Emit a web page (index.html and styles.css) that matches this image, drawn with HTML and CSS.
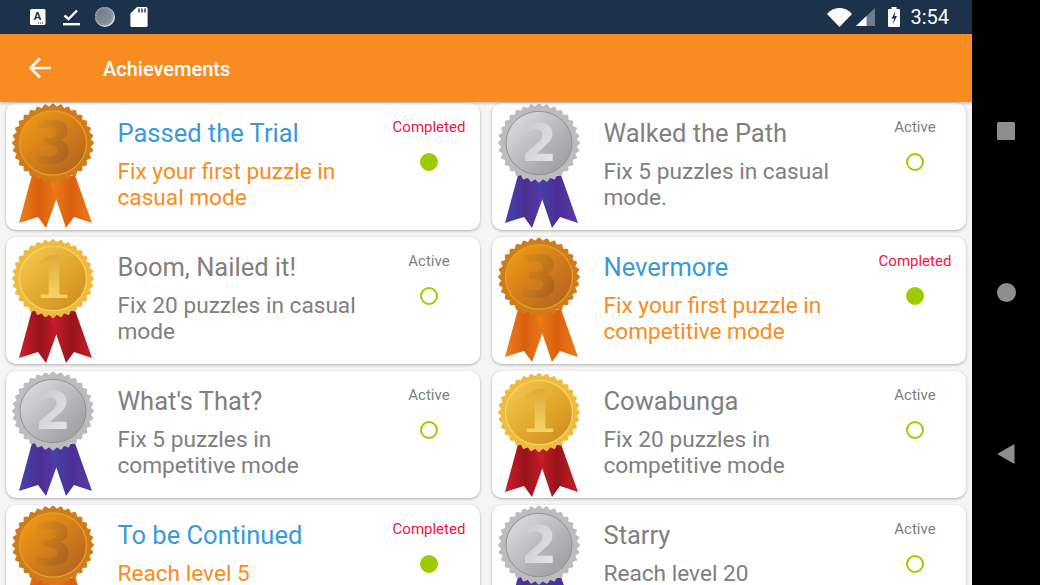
FILE: index.html
```html
<!DOCTYPE html>
<html lang="en">
<head>
<meta charset="utf-8">
<title>Achievements</title>
<link rel="stylesheet" href="styles.css">
</head>
<body>
<svg class="defs" aria-hidden="true">
  <defs>
    <linearGradient id="b3" x1="0" y1="0" x2="1" y2="1"><stop offset="0" stop-color="#f4a010"/><stop offset=".55" stop-color="#cf7a1c"/><stop offset="1" stop-color="#ad5f20"/></linearGradient>
    <linearGradient id="b3d" x1="0" y1="0" x2="1" y2="1"><stop offset="0" stop-color="#e8951a"/><stop offset="1" stop-color="#9a5520"/></linearGradient>
    <linearGradient id="r3" x1="0" y1="0" x2="1" y2="0"><stop offset="0" stop-color="#f07f17"/><stop offset=".5" stop-color="#d9600f"/><stop offset="1" stop-color="#ee7a16"/></linearGradient>
    <linearGradient id="b2" x1="0" y1="0" x2="1" y2="1"><stop offset="0" stop-color="#e2e2e4"/><stop offset=".6" stop-color="#b3b3b6"/><stop offset="1" stop-color="#98989c"/></linearGradient>
    <linearGradient id="b2d" x1="0" y1="0" x2="1" y2="1"><stop offset="0" stop-color="#c4c4c7"/><stop offset="1" stop-color="#ececee"/></linearGradient>
    <linearGradient id="r2" x1="0" y1="0" x2="1" y2="0"><stop offset="0" stop-color="#3f46ae"/><stop offset=".5" stop-color="#4b2f95"/><stop offset="1" stop-color="#5a3aa8"/></linearGradient>
    <linearGradient id="b1" x1="0" y1="0" x2="1" y2="1"><stop offset="0" stop-color="#f6cc50"/><stop offset=".6" stop-color="#e0a32a"/><stop offset="1" stop-color="#c98a1e"/></linearGradient>
    <linearGradient id="b1d" x1="0" y1="0" x2="0" y2="1"><stop offset="0" stop-color="#dca028"/><stop offset="1" stop-color="#fbe27a"/></linearGradient>
    <linearGradient id="r1" x1="0" y1="0" x2="1" y2="0"><stop offset="0" stop-color="#d21f2b"/><stop offset=".5" stop-color="#96141c"/><stop offset="1" stop-color="#cc1c26"/></linearGradient>
    <linearGradient id="disc" x1="0" y1="0" x2="1" y2="1"><stop offset="0" stop-color="#6d7888"/><stop offset="1" stop-color="#8c95a2"/></linearGradient>

    <g id="seal">
      <rect x="-29.400" y="-29.400" width="58.800" height="58.800" rx="1.500"/>
      <rect x="-29.400" y="-29.400" width="58.800" height="58.800" rx="1.500" transform="rotate(11.250)"/>
      <rect x="-29.400" y="-29.400" width="58.800" height="58.800" rx="1.500" transform="rotate(22.500)"/>
      <rect x="-29.400" y="-29.400" width="58.800" height="58.800" rx="1.500" transform="rotate(33.750)"/>
      <rect x="-29.400" y="-29.400" width="58.800" height="58.800" rx="1.500" transform="rotate(45)"/>
      <rect x="-29.400" y="-29.400" width="58.800" height="58.800" rx="1.500" transform="rotate(56.250)"/>
      <rect x="-29.400" y="-29.400" width="58.800" height="58.800" rx="1.500" transform="rotate(67.500)"/>
      <rect x="-29.400" y="-29.400" width="58.800" height="58.800" rx="1.500" transform="rotate(78.750)"/>
    </g>
    <path id="rib-l" d="M26 72 13 120l19-6 8 11 13-36-2-17z"/>
    <path id="rib-r" d="M44 78 60 125l8-11 18 6L69 72z"/>

    <symbol id="medal3" viewBox="0 0 100 128">
      <use href="#rib-l" fill="url(#r3)"/>
      <use href="#rib-r" fill="url(#r3)"/>
      <g transform="translate(47 40) scale(1 .96)">
        <use href="#seal" fill="#cf7c1c"/>
        <circle r="33.500" fill="url(#b3)" stroke="#e8a024" stroke-width="1.200"/>
      </g>
      <text class="digit" x="47" y="60" fill="url(#b3d)">3</text>
    </symbol>
    <symbol id="medal2" viewBox="0 0 100 128">
      <use href="#rib-l" fill="url(#r2)"/>
      <use href="#rib-r" fill="url(#r2)"/>
      <g transform="translate(47 40) scale(1 .96)">
        <use href="#seal" fill="#bcbcbf"/>
        <circle r="33" fill="url(#b2)" stroke="#8f8f93"/>
      </g>
      <text class="digit small" x="47" y="58" fill="url(#b2d)">2</text>
    </symbol>
    <symbol id="medal1" viewBox="0 0 100 128">
      <use href="#rib-l" y="1" fill="url(#r1)"/>
      <use href="#rib-r" y="1" fill="url(#r1)"/>
      <g transform="translate(47 41.500) scale(1 .96)">
        <use href="#seal" fill="#efbb3e"/>
        <circle r="33.500" fill="url(#b1)" stroke="#f5d468" stroke-width="1.200"/>
      </g>
      <text class="digit serif" x="47" y="61" fill="url(#b1d)">1</text>
    </symbol>
  </defs>
</svg>

<div class="app">
  <header class="status">
    <div class="status-left">
      <svg class="ic" width="18" height="18" viewBox="0 0 18 18"><rect x="1" y="1" width="15.500" height="16" rx="1.500" fill="#fff"/><text class="ic-a" x="8.500" y="12">A</text><path d="M9 15h1M11 15h1M13 15h1" stroke="#1c314a"/></svg>
      <svg class="ic" width="18" height="18" viewBox="0 0 18 18"><path d="M2.500 7.500 6.500 11 15 2.500" fill="none" stroke="#fff" stroke-width="2.400"/><rect x="1" y="15" width="17" height="2.400" fill="#fff"/></svg>
      <svg class="ic" width="20" height="20" viewBox="0 0 20 20"><circle cx="10" cy="10" r="10" fill="#dfe3e6"/><circle cx="9.300" cy="9.300" r="9.500" fill="url(#disc)"/><circle cx="9.300" cy="9.300" r="8.200" fill="none" stroke="#a9b0ba" stroke-width="1.600" stroke-dasharray="1 1.600"/></svg>
      <svg class="ic" width="18" height="20" viewBox="0 0 18 20"><path d="M7 0h9a1.600 1.600 0 0 1 1.600 1.600v16.800A1.600 1.600 0 0 1 16 20H2a1.600 1.600 0 0 1-1.600-1.600V6.400z" fill="#fff"/><path d="M9 1.500v4M12 1.500v4M15 1.500v4" stroke="#1c314a" stroke-width="1.400"/></svg>
    </div>
    <div class="status-right">
      <svg class="ic-wifi" width="25" height="19" viewBox="0 0 25 19"><path d="M0 6A16 16 0 0 1 25 6L12.500 19z" fill="#fff"/></svg>
      <svg class="ic-signal" width="19" height="18" viewBox="0 0 19 18"><path d="M0 18 19 0v18z" fill="#6f7c8c"/><path d="M0 18 10.500 8v10z" fill="#fff"/></svg>
      <svg class="ic-batt" width="12" height="20" viewBox="0 0 12 20"><path d="M3.500 0h5v2H11a1 1 0 0 1 1 1v16a1 1 0 0 1-1 1H1a1 1 0 0 1-1-1V3a1 1 0 0 1 1-1h2.500z" fill="#fff"/><path d="M7.500 4 3.500 11.500H6L5 17l4-8H6.500z" fill="#1c314a"/></svg>
      <span class="time">3:54</span>
    </div>
  </header>
  <div class="toolbar">
    <svg class="back" width="26" height="26" viewBox="0 0 26 26"><path d="M24 13H4M13 3.500 3.500 13l9.500 9.500" fill="none" stroke="#fff" stroke-width="2.600"/></svg>
    <h1 class="title">Achievements</h1>
  </div>
  <main class="list">
    <article class="card">
      <svg class="medal"><use href="#medal3"/></svg>
      <div class="body done"><h2>Passed the Trial</h2><p>Fix your first puzzle in casual mode</p></div>
      <div class="state done"><span>Completed</span><i class="dot"></i></div>
    </article>
    <article class="card">
      <svg class="medal"><use href="#medal2"/></svg>
      <div class="body"><h2>Walked the Path</h2><p>Fix 5 puzzles in casual mode.</p></div>
      <div class="state"><span>Active</span><i class="dot"></i></div>
    </article>
    <article class="card">
      <svg class="medal"><use href="#medal1"/></svg>
      <div class="body"><h2>Boom, Nailed it!</h2><p>Fix 20 puzzles in casual mode</p></div>
      <div class="state"><span>Active</span><i class="dot"></i></div>
    </article>
    <article class="card">
      <svg class="medal"><use href="#medal3"/></svg>
      <div class="body done"><h2>Nevermore</h2><p>Fix your first puzzle in competitive mode</p></div>
      <div class="state done"><span>Completed</span><i class="dot"></i></div>
    </article>
    <article class="card">
      <svg class="medal"><use href="#medal2"/></svg>
      <div class="body"><h2>What's That?</h2><p>Fix 5 puzzles in competitive mode</p></div>
      <div class="state"><span>Active</span><i class="dot"></i></div>
    </article>
    <article class="card">
      <svg class="medal"><use href="#medal1"/></svg>
      <div class="body"><h2>Cowabunga</h2><p>Fix 20 puzzles in competitive mode</p></div>
      <div class="state"><span>Active</span><i class="dot"></i></div>
    </article>
    <article class="card">
      <svg class="medal"><use href="#medal3"/></svg>
      <div class="body done"><h2>To be Continued</h2><p>Reach level 5</p></div>
      <div class="state done"><span>Completed</span><i class="dot"></i></div>
    </article>
    <article class="card">
      <svg class="medal"><use href="#medal2"/></svg>
      <div class="body"><h2>Starry</h2><p>Reach level 20</p></div>
      <div class="state"><span>Active</span><i class="dot"></i></div>
    </article>
  </main>
</div>
<nav class="nav">
  <span class="nav-square"></span>
  <span class="nav-circle"></span>
  <svg class="nav-back" width="18" height="20" viewBox="0 0 18 20"><path d="M17.500 1v18a.6.6 0 0 1-.9.500L1 10.500a.6.6 0 0 1 0-1L16.600.5a.6.6 0 0 1 .9.500z" fill="#8e8e8e"/></svg>
</nav>
</body>
</html>
```

FILE: styles.css
```css
* { box-sizing: border-box; }
html, body { margin: 0; height: 585px; overflow: hidden; }
body { display: flex; width: 1040px; background: #000; font-family: Roboto, "Liberation Sans", sans-serif; }
.defs { display: block; width: 0; height: 0; flex: none; }

.app { width: 972px; height: 585px; display: flex; flex-direction: column; background: #f5f5f5; overflow: hidden; }

.status { flex: none; height: 34px; background: #1c314a; display: flex; justify-content: space-between; align-items: center; padding: 0 23px 0 29px; }
.status-left { display: flex; align-items: center; }
.ic { display: block; margin-right: 15px; }
.ic-a { font: 700 11px "Liberation Sans", sans-serif; text-anchor: middle; fill: #1c314a; }
.status-right { display: flex; align-items: center; }
.ic-wifi { display: block; margin-right: 4px; }
.ic-signal { display: block; margin-right: 13px; }
.ic-batt { display: block; margin-right: 10px; }
.time { color: #fff; font-size: 20px; line-height: 22px; }

.toolbar { flex: none; height: 68px; background: #f98c20; display: flex; align-items: center; padding-left: 27px; box-shadow: 0 1px 3px rgba(0,0,0,.3); position: relative; z-index: 1; }
.back { display: block; margin-right: 50px; }
.title { margin: 2px 0 0; color: #fff; font-size: 20px; font-weight: 500; }

.list { flex: 1; display: grid; grid-template-columns: 474px 474px; grid-auto-rows: 127px; column-gap: 12px; row-gap: 7px; padding: 1px 6px 0; align-content: start; }
.card { display: flex; background: #fff; border-radius: 10px; box-shadow: 0 1px 3px rgba(0,0,0,.3); }
.medal { display: block; flex: none; width: 100px; height: 128px; overflow: visible; }
.digit { font: 700 58px "DejaVu Sans", sans-serif; text-anchor: middle; }
.digit.small { font-size: 52px; }
.digit.serif { font-family: "DejaVu Serif", serif; }

.body { flex: none; width: 270px; margin-left: 11.500px; padding-top: 14px; color: #808080; }
.body h2 { margin: 0; font-size: 25.500px; line-height: 32px; font-weight: 400; }
.body p { margin: 9.500px 0 0; font-size: 22.650px; line-height: 26px; }
.body.done h2 { color: #3a9ad9; }
.body.done p { color: #f98c20; }

.state { flex: 1; display: flex; flex-direction: column; align-items: center; padding-top: 15px; padding-right: 9.500px; color: #808080; }
.state span { font-size: 15px; line-height: 18px; white-space: nowrap; }
.state.done span { color: #ee1642; }
.dot { display: block; width: 18px; height: 18px; margin-top: 17px; border-radius: 50%; border: 2px solid #9ccc00; }
.state.done .dot { background: #9ccc00; }

.nav { flex: 1; height: 585px; background: #000; display: flex; flex-direction: column; align-items: center; padding-top: 122px; }
.nav-square { display: block; width: 18px; height: 18px; border-radius: 1.500px; background: #8e8e8e; }
.nav-circle { display: block; width: 19px; height: 19px; border-radius: 50%; background: #8e8e8e; margin-top: 143px; }
.nav-back { display: block; margin-top: 142px; }
```
